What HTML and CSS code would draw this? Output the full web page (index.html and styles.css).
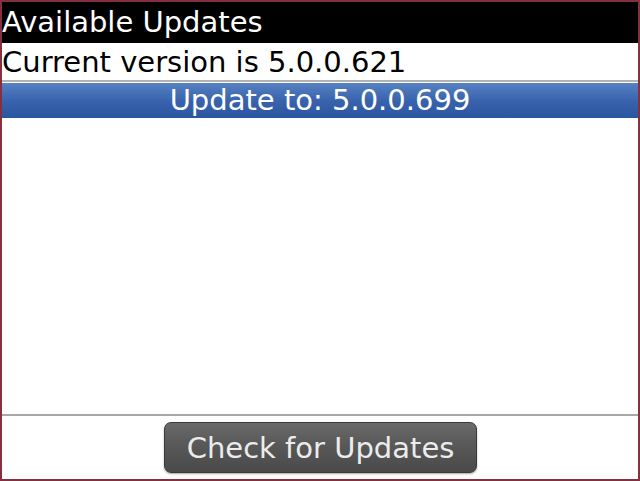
FILE: index.html
```html
<!DOCTYPE html>
<html>
<head>
  <meta charset="utf-8">
  <title>Available Updates</title>
  <link rel="stylesheet" href="styles.css">
</head>
<body>
  <div class="screen">
    <div class="title">Available Updates</div>
    <div class="current">Current version is 5.0.0.621</div>
    <div class="selected">Update to: 5.0.0.699</div>
    <div class="list"></div>
    <div class="footer">
      <button class="check-button">Check for Updates</button>
    </div>
  </div>
</body>
</html>
```

FILE: styles.css
```css
html, body {
  margin: 0;
  padding: 0;
  background-color: #fff;
}

.screen {
  width: 640px;
  height: 481px;
  box-sizing: border-box;
  border: 2px solid #86303f;
  display: flex;
  flex-direction: column;
  font-family: "DejaVu Sans", sans-serif;
  font-size: 29px;
  overflow: hidden;
}

.title {
  background-color: #000;
  color: #fff;
  height: 41px;
  line-height: 40px;
  white-space: nowrap;
}

.current {
  height: 37px;
  line-height: 39px;
  color: #000;
  border-bottom: 2px solid #b4b4b4;
}

.selected {
  height: 35px;
  line-height: 34px;
  margin-top: 1px;
  text-align: center;
  color: #fff;
  background: linear-gradient(#5682c2, #3963ad 50%, #2a55a0);
}

.list {
  flex: 1;
}

.footer {
  border-top: 2px solid #a8a8a8;
  height: 65px;
  display: flex;
  justify-content: center;
  padding-top: 6px;
  box-sizing: border-box;
}

.check-button {
  width: 313px;
  height: 51px;
  margin-left: 1px;
  border: 1px solid #3a3a3a;
  border-radius: 7px;
  background: linear-gradient(#6a6a6a, #585858 45%, #4a4a4a);
  color: #ececec;
  font-family: "DejaVu Sans", sans-serif;
  font-size: 29px;
  padding: 0;
  box-shadow: 0 1px 2px rgba(0, 0, 0, 0.35);
}
```
